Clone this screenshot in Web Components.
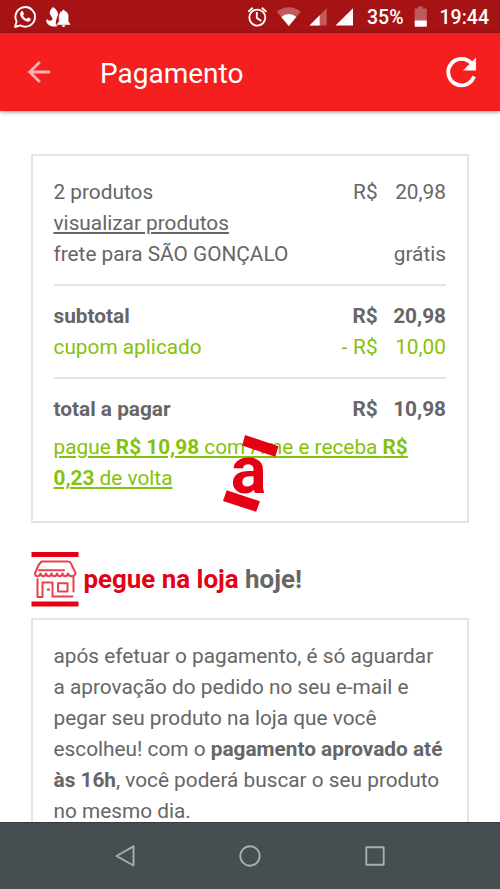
<!DOCTYPE html>
<html lang="pt-BR">
<head>
<meta charset="utf-8">
<title>Pagamento</title>
<style>
  body {
    margin: 0;
    width: 500px;
    height: 889px;
    overflow: hidden;
    background: #fff;
    color: #666;
    font-family: Roboto, "Liberation Sans", sans-serif;
    font-size: 20.8px;
    line-height: 31px;
  }
</style>
</head>
<body>
<app-pagamento></app-pagamento>

<script>
// Barra de estado do Android
class BarraEstado extends HTMLElement {
  constructor() {
    super();
    this.attachShadow({ mode: "open" });
  }

  connectedCallback() {
    this.shadowRoot.innerHTML = `
      <style>
        :host {
          display: flex;
          justify-content: space-between;
          height: 33px;
          box-sizing: border-box;
          padding: 0 11px 0 13px;
          background: #a61315;
          color: #fff;
          font-size: 19.5px;
          font-weight: 500;
          line-height: 36px;
        }
        div { display: flex; }
        svg { display: block; height: 33px; }
        .hora { margin-left: 14px; }
      </style>
      <div>
        <svg width="60" height="33" viewBox="13 0 60 33">
          <!-- WhatsApp -->
          <path d="M15 27l1.600-5.500a9.800 9.800 0 1 1 3.800 3.900z" fill="none" stroke="#fff" stroke-width="1.900" stroke-linejoin="round"/>
          <path d="M21.300 11.500c.5-.6 1.500-.5 1.800.2l.8 2c.2.600-.7 1.300-.9 1.800.7 1.600 2 2.700 3.600 3.400.6-.3 1.100-1.500 1.700-1.300l2 1c.8.5.3 1.900-.3 2.400-1.300 1-3 .8-4.400.1-2.400-1.100-4.300-3-5.200-5.500-.5-1.500-.2-3.100.9-4.100z" fill="#fff"/>
          <!-- chama e sino -->
          <path d="M53 7c3.500 2.200 5.200 5.100 5 8-.8 2-2 4.500-2.300 8.500l2 2.500c-5 1.700-10.500-.3-11.700-5.500l1.500-1.200c1.200 1.700 3.300 2 4.500.8 2-2-2.300-4.200-2.300-7.600 0-2.400 1.900-3.600 3.300-5.500z" fill="#fff"/>
          <path d="M63.500 9.500c.9 0 1.300.6 1.300 1.300 2.700.8 3.900 3 3.900 5.600v5.100l1.800 2.600v1H56.700v-1l2-2.600v-5.100c0-2.600 1-4.800 3.600-5.600 0-.7.4-1.300 1.200-1.300z" fill="#fff" stroke="#a61315" stroke-width=".5"/>
          <path d="M61.700 25.300h3.600a1.800 1.800 0 0 1-3.600 0z" fill="#fff"/>
        </svg>
      </div>
      <div>
        <svg width="121" height="33" viewBox="245 0 121 33">
          <!-- despertador -->
          <g fill="none" stroke="#fff" stroke-width="1.800">
            <circle cx="256.300" cy="17.600" r="8"/>
            <path d="M255.800 12v6l4.500 3M247.300 11.700l4.500-3.900M260.800 7.800l4.500 3.900"/>
          </g>
          <!-- wifi -->
          <path d="M275.800 11.800a18 18 0 0 1 24 0L287.800 26z" fill="#fff" opacity=".3"/>
          <path d="M280.300 16.900a11.500 11.500 0 0 1 15 0L287.800 26z" fill="#fff"/>
          <!-- sinal dos chips -->
          <path d="M325.700 8.300V25.600H308.500z" fill="#fff" opacity=".3"/>
          <path d="M318.700 15.300V25.600H308.500z" fill="#fff"/>
          <path d="M352 8.300V25.600H334.500z" fill="#fff"/>
        </svg>
        <span>35%</span>
        <svg width="30" height="33" viewBox="402 0 30 33" style="margin-right:-8px">
          <path d="M416 6.500h5v2h3.800V21H412.700V8.500H416z" fill="#fff" opacity=".3"/>
          <path d="M412.700 20.500h12.100v6.200h-12.100z" fill="#fff"/>
        </svg>
        <span class="hora">19:44</span>
      </div>
    `;
  }
}

// Cabeçalho com voltar, título (slot) e recarregar
class BarraTitulo extends HTMLElement {
  constructor() {
    super();
    this.attachShadow({ mode: "open" });
  }

  connectedCallback() {
    this.shadowRoot.innerHTML = `
      <style>
        :host {
          display: flex;
          align-items: center;
          height: 78px;
          box-sizing: border-box;
          padding: 0 22px 0 27px;
          background: #f61f20;
          color: #fff;
          font-size: 28px;
          box-shadow: 0 1px 4px rgba(0, 0, 0, .45);
        }
        .titulo { flex: 1; margin-left: 49px; padding-top: 2px; }
        svg { display: block; }
      </style>
      <svg width="24" height="24" viewBox="0 0 24 24" fill="none" stroke="#fff" stroke-opacity=".65" stroke-width="2.800">
        <path d="M23 12H3M12.800 2L2.800 12l10 10"/>
      </svg>
      <span class="titulo"><slot></slot></span>
      <svg width="34" height="34" viewBox="0 0 34 34">
        <path d="M30 21.300A13.200 13.200 0 1 1 27.300 8.300" fill="none" stroke="#fff" stroke-width="3.800"/>
        <path d="M32 2.500V15.500H19z" fill="#fff"/>
      </svg>
    `;
  }
}

// Caixa com borda cinza
class CartaoInfo extends HTMLElement {
  constructor() {
    super();
    this.attachShadow({ mode: "open" });
  }

  connectedCallback() {
    this.shadowRoot.innerHTML = `
      <style>
        :host {
          display: block;
          box-sizing: border-box;
          border: 1.5px solid #e0e0e0;
          border-width: 2px;
          border-color: #e4e4e4;
          padding: 21px 21px 20px 20.5px;
        }
      </style>
      <slot></slot>
    `;
  }
}

// Linha do resumo: descrição à esquerda, valor à direita
class LinhaResumo extends HTMLElement {
  constructor() {
    super();
    this.attachShadow({ mode: "open" });
  }

  connectedCallback() {
    this.shadowRoot.innerHTML = `
      <style>
        :host {
          display: flex;
          justify-content: space-between;
        }
        :host([forte]) { font-weight: 700; }
        :host([separada]) {
          border-top: 2px solid #e4e4e4;
          margin-top: 14px;
          padding-top: 15px;
        }
        .valor { white-space: pre; word-spacing: .7px; }
        :host([forte]) .valor { word-spacing: 0; }
      </style>
      <span><slot></slot></span>
      <span class="valor"><slot name="valor"></slot></span>
    `;
  }
}

// Logo "a" inclinado que aparece durante o carregamento
class LogoCarregando extends HTMLElement {
  constructor() {
    super();
    this.attachShadow({ mode: "open" });
  }

  connectedCallback() {
    this.shadowRoot.innerHTML = `
      <style>
        :host {
          position: absolute;
          left: 220px;
          top: 432px;
        }
        svg { display: block; }
        text { font: 700 67px Roboto, "Liberation Sans", sans-serif; }
      </style>
      <svg width="62" height="82" viewBox="220 432 62 82" fill="#e60014">
        <path d="M245 435l33.500 11.300-3.200 10.500-33-11.300z"/>
        <text x="230.700" y="493">a</text>
        <path d="M226.700 490.300l33.200 11-3.700 10.500-33.200-10.800z"/>
      </svg>
    `;
  }
}

// Título da seção de retirada, com o ícone da loja
class TituloLoja extends HTMLElement {
  constructor() {
    super();
    this.attachShadow({ mode: "open" });
  }

  connectedCallback() {
    this.shadowRoot.innerHTML = `
      <style>
        :host {
          display: flex;
          align-items: center;
          gap: 4.5px;
          height: 55px;
          font-size: 25.900px;
          font-weight: 700;
        }
        svg { display: block; }
      </style>
      <svg width="48" height="55" viewBox="0 0 48 55" fill="none" stroke="#e5434f" stroke-width="2" stroke-linecap="round" stroke-linejoin="round">
        <path d="M.5 0h47v5H.5zM.5 49.500h47v5H.5z" fill="#e60014" stroke="none"/>
        <path d="M8 12.500L10.500 9.500H37c1.500 0 2.500.7 3 2l4.500 9.500M7.500 13L4 21.500M8 18.300H33"/>
        <path d="M4 21.500c0 3.500 5 3.500 5.500 0 .5 3.500 5 3.500 5.500 0 .5 3.500 5 3.500 5.500 0 .5 3.500 5 3.500 5.500 0 .5 3.500 5 3.500 5.500 0 .5 3.500 5 3.500 5.500 0 .5 3.500 6.500 3.500 7.500 0"/>
        <path d="M6.500 27V45H11.500V30.500H21.500V44.500H41.500M42.500 25V39.500M27 31.300h9.500v8.200H27z"/>
        <circle cx="17.500" cy="37.500" r=".6"/>
      </svg>
      <span><slot></slot></span>
    `;
  }
}

// Botões de navegação do Android
class BarraNavegacao extends HTMLElement {
  constructor() {
    super();
    this.attachShadow({ mode: "open" });
  }

  connectedCallback() {
    this.shadowRoot.innerHTML = `
      <style>
        :host {
          display: grid;
          grid-template-columns: repeat(3, 125px);
          justify-content: center;
          justify-items: center;
          align-items: center;
          height: 67px;
          box-sizing: border-box;
          border-top: 1px solid #343a3d;
          background: #464e52;
        }
        svg { display: block; fill: none; stroke: #a9adb0; stroke-width: 1.900; stroke-linejoin: round; }
      </style>
      <svg width="24" height="24" viewBox="0 0 24 24"><path d="M20.500 2.300V21.500L3.500 12z"/></svg>
      <svg width="24" height="24" viewBox="0 0 24 24"><circle cx="12" cy="12" r="9.700"/></svg>
      <svg width="24" height="24" viewBox="0 0 24 24"><path d="M3.300 3.300h17.400v17.400H3.300z"/></svg>
    `;
  }
}

// Tela completa
class AppPagamento extends HTMLElement {
  constructor() {
    super();
    this.attachShadow({ mode: "open" });
  }

  connectedCallback() {
    this.shadowRoot.innerHTML = `
      <style>
        :host {
          display: flex;
          flex-direction: column;
          position: relative;
          height: 889px;
        }
        main {
          flex: 1;
          min-height: 0;
          overflow: hidden;
          padding: 43px 31px 0;
        }
        .resumo { height: 369px; }
        .link { text-decoration: underline; }
        .verde { color: #85c20a; }
        .vermelho { color: #e60014; }
        .ame { margin: 7px 0 0; }
        titulo-loja { margin: 29px 0 11px; }
        .aviso p { margin: 0; }
      </style>
      <barra-estado></barra-estado>
      <barra-titulo>Pagamento</barra-titulo>
      <main>
        <cartao-info class="resumo">
          <linha-resumo>2 produtos<span slot="valor">R$   20,98</span></linha-resumo>
          <linha-resumo><span class="link">visualizar produtos</span></linha-resumo>
          <linha-resumo>frete para SÃO GONÇALO<span slot="valor">grátis</span></linha-resumo>
          <linha-resumo separada forte>subtotal<span slot="valor">R$   20,98</span></linha-resumo>
          <linha-resumo class="verde">cupom aplicado<span slot="valor">- R$   10,00</span></linha-resumo>
          <linha-resumo separada forte>total a pagar<span slot="valor">R$   10,98</span></linha-resumo>
          <p class="ame verde link">pague <b>R$ 10,98</b> com Ame e receba <b>R$<br>0,23</b> de volta</p>
        </cartao-info>
        <titulo-loja><span class="vermelho">pegue na loja</span> hoje!</titulo-loja>
        <cartao-info class="aviso">
          <p>após efetuar o pagamento, é só aguardar<br>a aprovação do pedido no seu e-mail e<br>pegar seu produto na loja que você<br>escolheu! com o <b>pagamento aprovado até<br>às 16h</b>, você poderá buscar o seu produto<br>no mesmo dia.</p>
        </cartao-info>
      </main>
      <barra-navegacao></barra-navegacao>
      <logo-carregando></logo-carregando>
    `;
  }
}

window.customElements.define("barra-estado", BarraEstado);
window.customElements.define("barra-titulo", BarraTitulo);
window.customElements.define("cartao-info", CartaoInfo);
window.customElements.define("linha-resumo", LinhaResumo);
window.customElements.define("logo-carregando", LogoCarregando);
window.customElements.define("titulo-loja", TituloLoja);
window.customElements.define("barra-navegacao", BarraNavegacao);
window.customElements.define("app-pagamento", AppPagamento);
</script>
</body>
</html>
